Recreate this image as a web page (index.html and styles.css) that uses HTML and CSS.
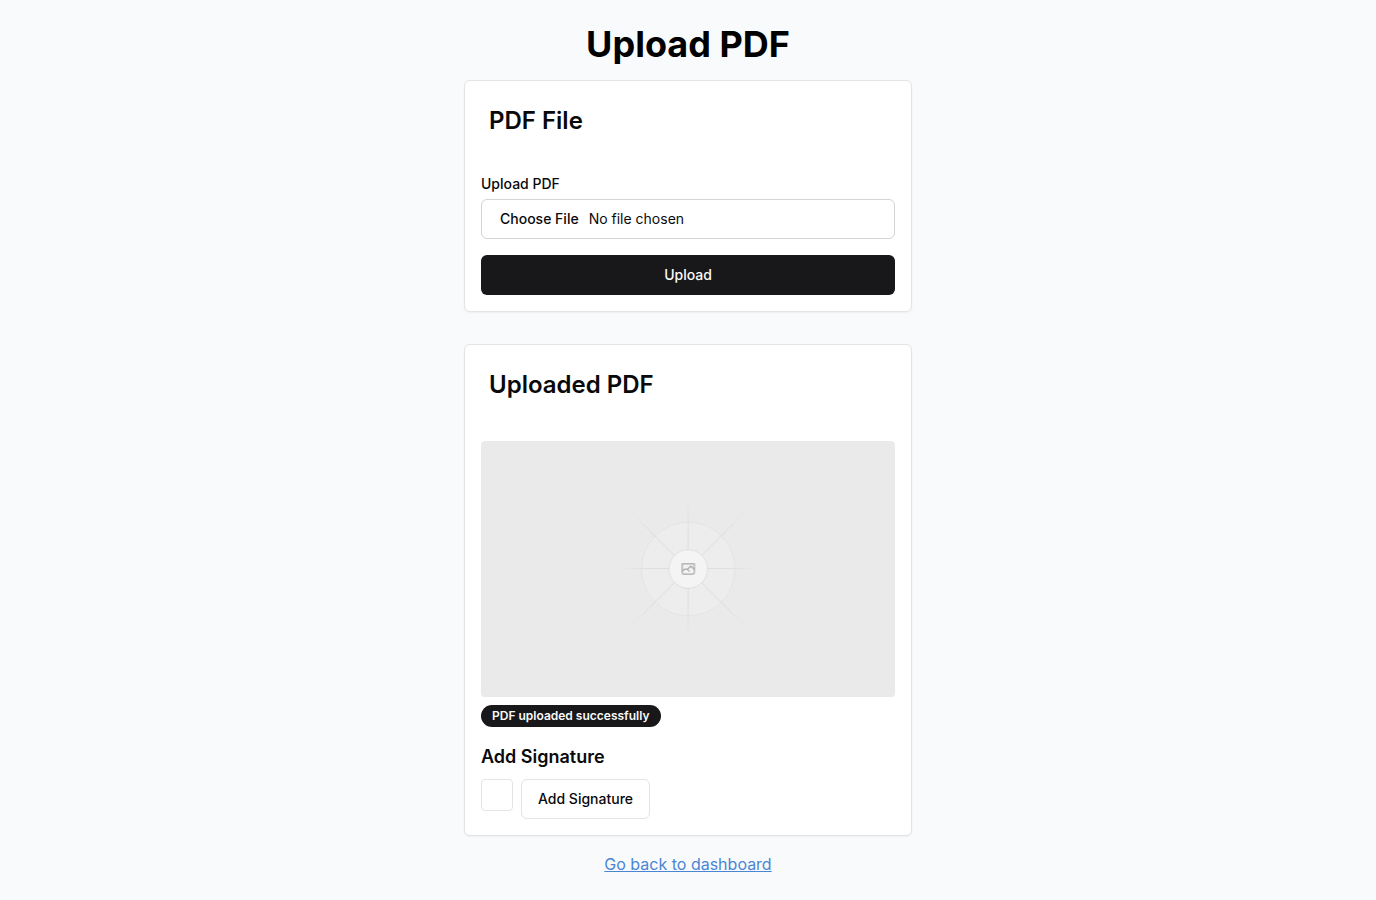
FILE: index.html
```html
<!DOCTYPE html>
<html lang="en">
<head>
  <meta charset="utf-8">
  <meta name="viewport" content="width=device-width, initial-scale=1">
  <title>Upload PDF</title>
  <link rel="stylesheet" href="styles.css">
</head>
<body>
  <main class="page">
    <h1 class="page-title">Upload PDF</h1>

    <section class="card">
      <header class="card-header">
        <h2 class="card-title">PDF File</h2>
      </header>
      <form class="card-content upload-form">
        <div class="field">
          <label class="label" for="pdf">Upload PDF</label>
          <input class="file-input" id="pdf" type="file">
        </div>
        <button class="button button-primary" type="button">Upload</button>
      </form>
    </section>

    <section class="card">
      <header class="card-header">
        <h2 class="card-title">Uploaded PDF</h2>
      </header>
      <div class="card-content">
        <svg class="preview" viewBox="0 0 1200 1200" preserveAspectRatio="xMidYMid slice" fill="none" role="img" aria-label="Uploaded PDF preview">
          <defs>
            <linearGradient id="ray" x1="355" y1="0" x2="845" y2="0" gradientUnits="userSpaceOnUse">
              <stop stop-color="#c9c9c9" stop-opacity="0"/>
              <stop offset=".208" stop-color="#c9c9c9"/>
              <stop offset=".792" stop-color="#c9c9c9"/>
              <stop offset="1" stop-color="#c9c9c9" stop-opacity="0"/>
            </linearGradient>
            <linearGradient id="axis" x1="404" y1="0" x2="796" y2="0" gradientUnits="userSpaceOnUse">
              <stop stop-color="#c9c9c9" stop-opacity="0"/>
              <stop offset=".208" stop-color="#c9c9c9"/>
              <stop offset=".792" stop-color="#c9c9c9"/>
              <stop offset="1" stop-color="#c9c9c9" stop-opacity="0"/>
            </linearGradient>
          </defs>
          <rect width="1200" height="1200" fill="#eaeaea"/>
          <g opacity=".5">
            <circle cx="600.7" cy="599.9" r="135.4" fill="#fafafa" stroke="#c9c9c9" stroke-width="2.4" opacity=".5"/>
            <g stroke-width="2.4">
              <path stroke="url(#ray)" d="M355 600h490" transform="rotate(45 600 600)"/>
              <path stroke="url(#ray)" d="M355 600h490" transform="rotate(-45 600 600)"/>
              <path stroke="url(#axis)" d="M404 598.7h392"/>
              <path stroke="url(#axis)" d="M404 600h392" transform="rotate(90 600 600)"/>
            </g>
            <circle cx="600.7" cy="599.9" r="56" fill="#fff" stroke="#c9c9c9" stroke-width="2.4"/>
            <path fill="#666" fill-rule="evenodd" d="M616.426 586.58h-31.434v16.176l3.553-3.554.531-.531h9.068l.074-.074 8.463-8.463h2.565l7.18 7.181V586.58Zm-15.715 14.654 3.698 3.699 1.283 1.282-2.565 2.565-1.282-1.283-5.2-5.199h-6.066l-5.514 5.514-.073.073v2.876a2.418 2.418 0 0 0 2.418 2.418h26.598a2.418 2.418 0 0 0 2.418-2.418v-8.317l-8.463-8.463-7.181 7.181-.071.072Zm-19.347 5.442v4.085a6.045 6.045 0 0 0 6.046 6.045h26.598a6.044 6.044 0 0 0 6.045-6.045v-7.108l1.356-1.355-1.282-1.283-.074-.073v-17.989h-38.689v23.43l-.146.146.146.147Z"/>
          </g>
        </svg>
        <div class="badge">PDF uploaded successfully</div>
        <h3 class="section-title">Add Signature</h3>
        <div class="signature-row">
          <div class="signature-box"></div>
          <button class="button button-outline" type="button">Add Signature</button>
        </div>
      </div>
    </section>

    <a class="back-link" href="#">Go back to dashboard</a>
  </main>
</body>
</html>
```

FILE: styles.css
```css
*,
*::before,
*::after {
  box-sizing: border-box;
}

body {
  margin: 0;
  min-height: 100vh;
  background: #f9fafb;
  color: #09090b;
  font-family: Inter, "Liberation Sans", sans-serif;
  font-size: 16px;
  line-height: 24px;
}

h1,
h2,
h3 {
  margin: 0;
}

.page {
  display: flex;
  flex-direction: column;
  align-items: center;
  padding: 24px 16px;
}

.page-title {
  margin-bottom: 16px;
  color: #000;
  font-size: 36px;
  font-weight: 700;
  line-height: 40px;
}

.card {
  width: 100%;
  max-width: 448px;
  border: 1px solid #e4e4e7;
  border-radius: 6px;
  background: #fff;
  box-shadow: 0 1px 2px rgba(0, 0, 0, 0.05);
}

.card + .card {
  margin-top: 32px;
}

.card-header {
  padding: 24px;
}

.card-title {
  font-size: 24px;
  font-weight: 600;
  line-height: 32px;
}

.card-content {
  padding: 16px;
}

.upload-form,
.field {
  display: flex;
  flex-direction: column;
}

.upload-form {
  gap: 16px;
}

.field {
  gap: 8px;
}

.label {
  font-size: 14px;
  font-weight: 500;
  line-height: 14px;
}

.file-input {
  width: 100%;
  height: 40px;
  padding: 8px 12px;
  border: 1px solid #d4d4d8;
  border-radius: 6px;
  background: #fff;
  color: inherit;
  font: 400 14px/20px Inter, "Liberation Sans", sans-serif;
}

.file-input::file-selector-button {
  border: 0;
  background: transparent;
  color: inherit;
  font: inherit;
  font-weight: 500;
}

.button {
  height: 40px;
  padding: 0 16px;
  border: 1px solid transparent;
  border-radius: 6px;
  font: 500 14px/20px Inter, "Liberation Sans", sans-serif;
  cursor: pointer;
}

.button-primary {
  background: #18181b;
  color: #fafafa;
}

.button-outline {
  border-color: #e4e4e7;
  background: #fff;
  color: #09090b;
}

.preview {
  display: block;
  width: 100%;
  height: 256px;
  border-radius: 4px;
}

.badge {
  width: fit-content;
  margin-top: 8px;
  padding: 3px 11px;
  border-radius: 11px;
  background: #18181b;
  color: #fafafa;
  font-size: 12px;
  font-weight: 600;
  line-height: 16px;
}

.section-title {
  margin: 16px 0 8px;
  font-size: 18px;
  font-weight: 600;
  line-height: 28px;
}

.signature-row {
  display: flex;
  align-items: flex-start;
  gap: 8px;
}

.signature-box {
  width: 32px;
  height: 32px;
  border: 1px solid #e4e4e7;
  border-radius: 4px;
}

.back-link {
  margin-top: 16px;
  color: #4a86d4;
  text-decoration: underline;
}
```
